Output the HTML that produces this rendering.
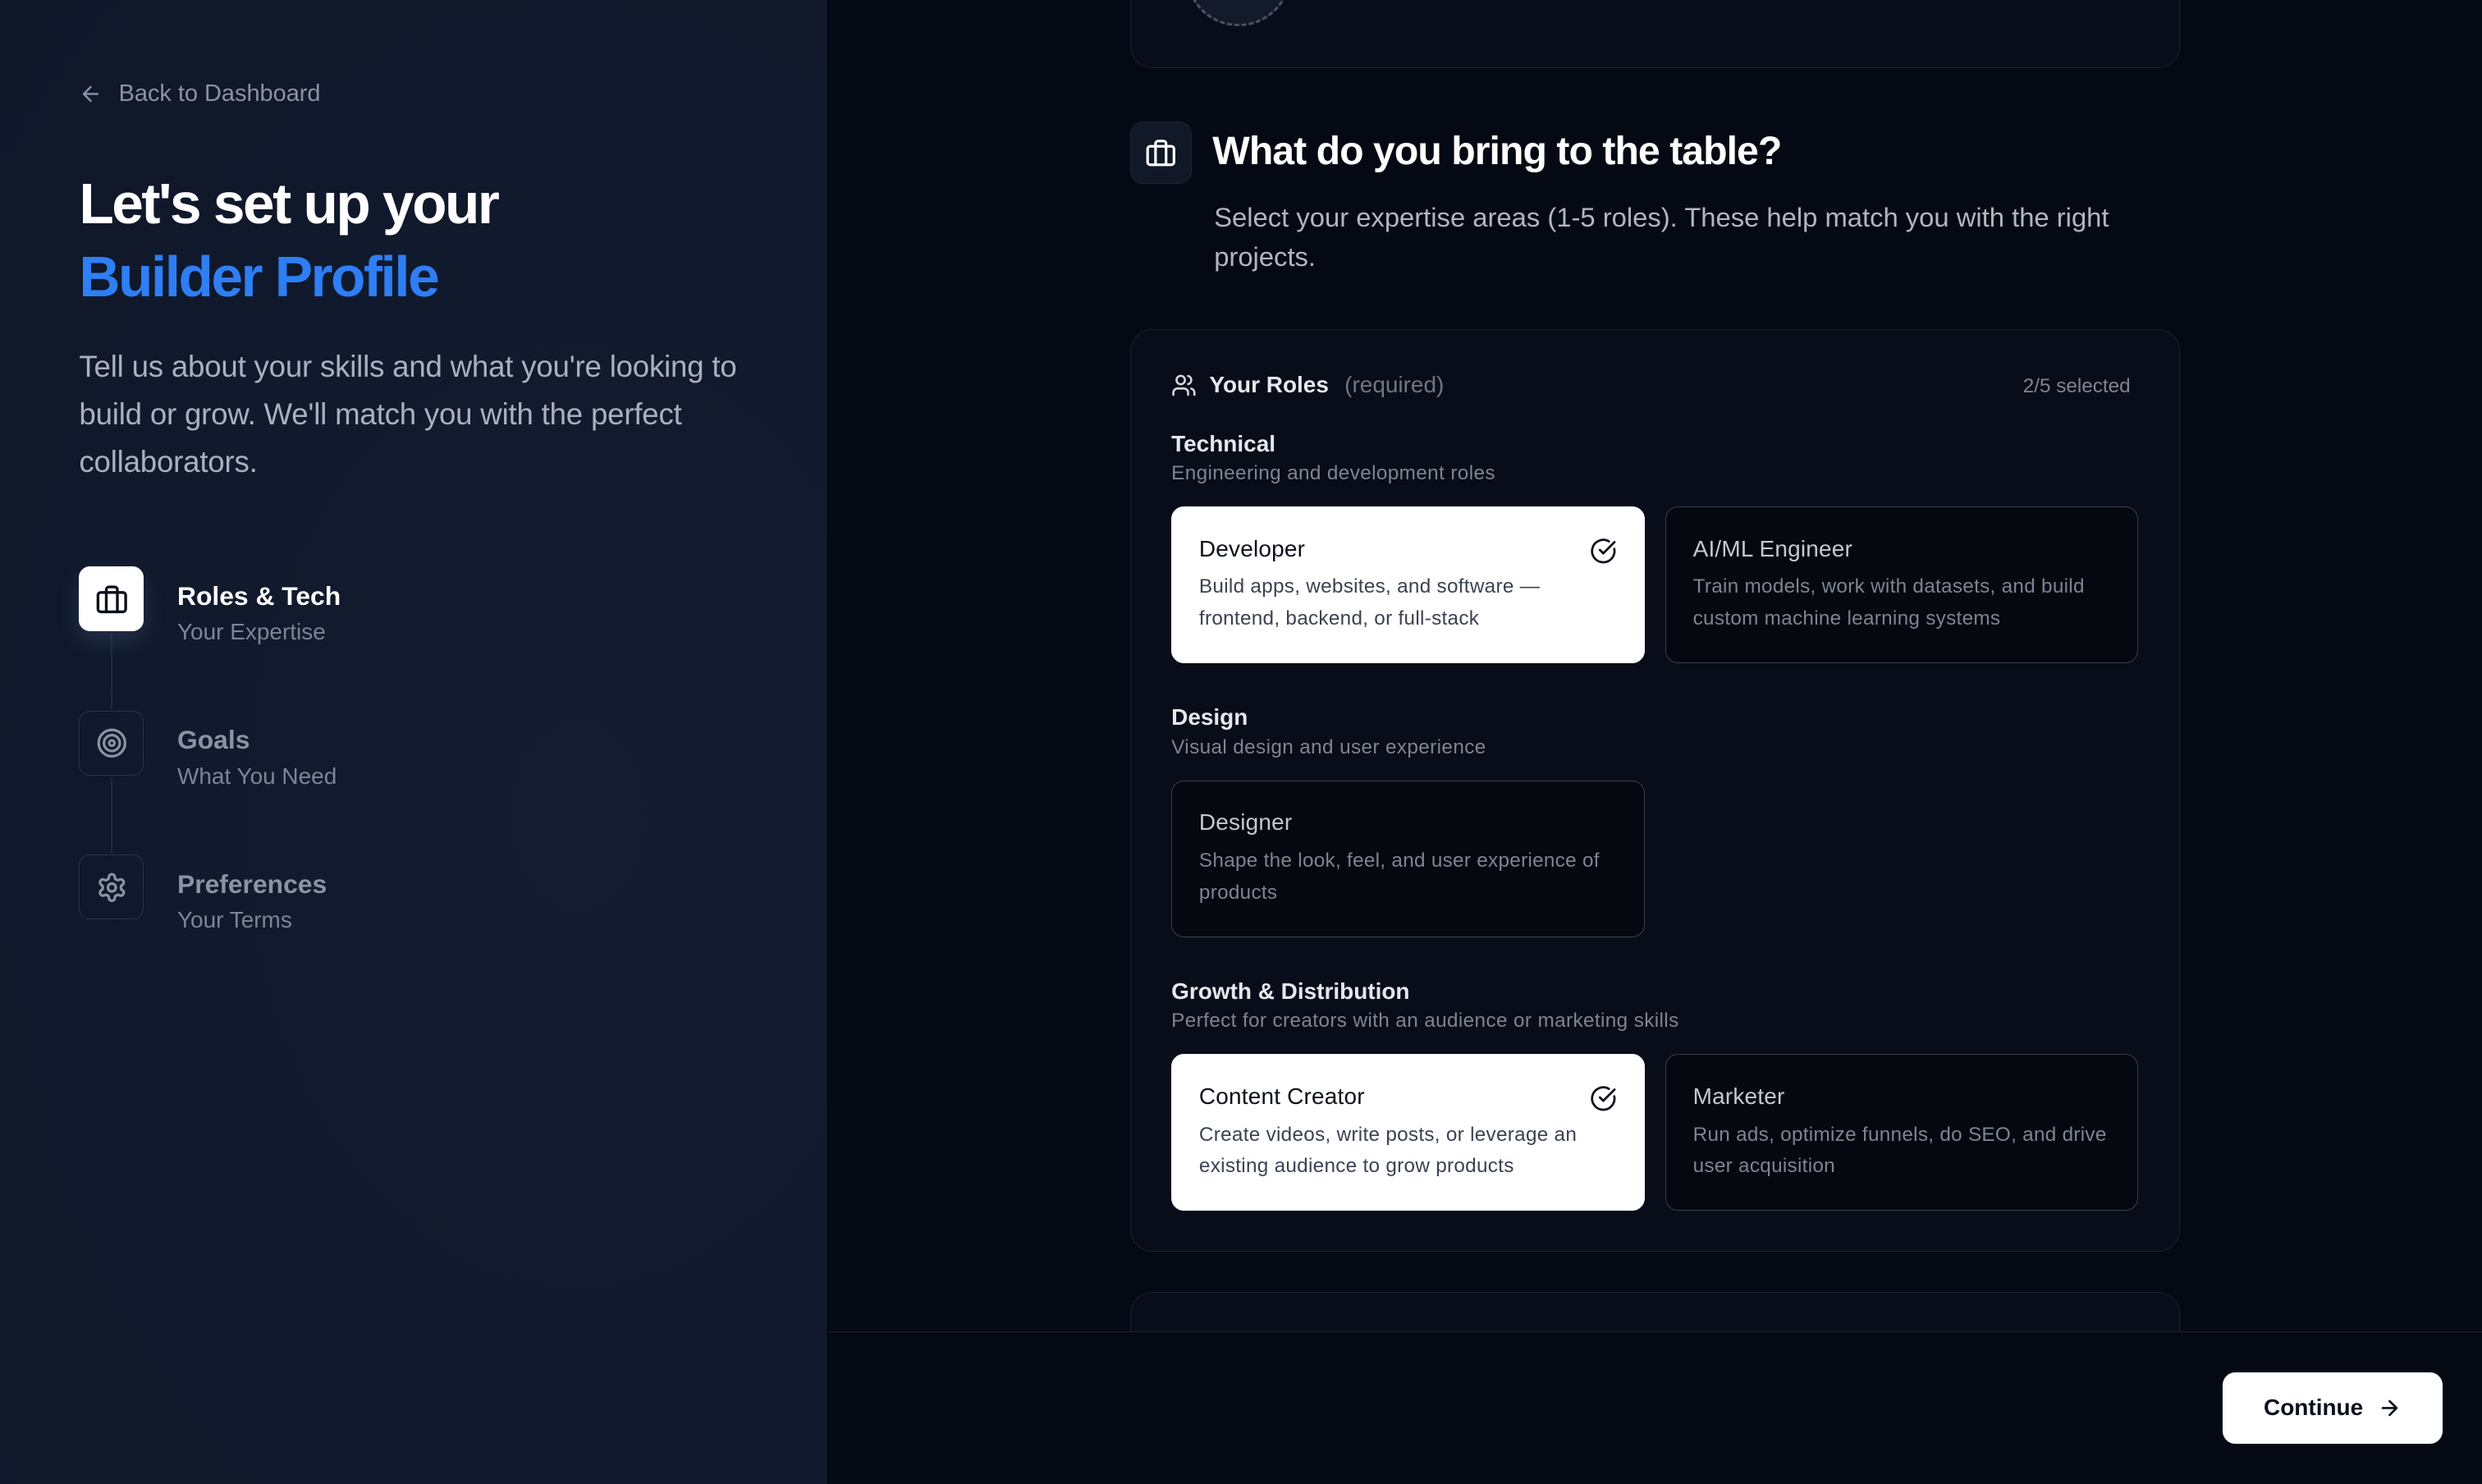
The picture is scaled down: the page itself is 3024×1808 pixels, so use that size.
<!DOCTYPE html>
<html><head><meta charset="utf-8">
<style>
*{box-sizing:border-box;margin:0;padding:0}
html,body{width:3024px;height:1808px;overflow:hidden;background:#050913}
#w{zoom:1.92857;width:1568px;height:937.5px;position:relative;font-family:"Liberation Sans",sans-serif;overflow:hidden;background:#050913}
.left{position:absolute;left:0;top:0;width:522px;height:100%;background:radial-gradient(ellipse at 70% 55%,#141d30 0%,#111a2c 45%,#0f1729 100%);border-right:1px solid #1a2233}
.ab{position:absolute;white-space:nowrap}
.back{left:50px;top:51px;font-size:15px;color:#8a93a6;display:flex;align-items:center;gap:10px}
.h1{left:50px;top:106px;font-size:36px;font-weight:700;letter-spacing:-1.3px;line-height:46px;color:#fff}
.h1 span{color:#2e7ef4}
.p{left:50px;top:217px;font-size:19px;line-height:30px;color:#a9b0be;white-space:normal;width:440px;letter-spacing:-0.1px}
.step{position:absolute;left:50px;width:41px;height:41px;border-radius:7px;border:1px solid #2a3244;display:flex;align-items:center;justify-content:center}
.st{position:absolute;left:112px;font-size:16.5px;font-weight:700;color:#8a93a3}
.ss{position:absolute;left:112px;font-size:14.5px;color:#7c8596}
.vl{position:absolute;left:70px;width:1px;background:#1f283a}
.right{position:absolute;left:523px;top:0;right:0;bottom:0;background:#050913}
.card{position:absolute;background:#080d19;border:1px solid #1a2233;border-radius:14px}
.rc{position:absolute;width:299px;height:99px;border-radius:8px;border:1px solid #3a404c;background:#05080f;padding:18px 17px}
.rc.sel{background:#fff;border-color:#fff}
.rc b{display:block;font-size:14.5px;font-weight:400;color:#c4c8d0;margin-bottom:6px;margin-top:0;letter-spacing:0.1px}
.rc p{font-size:12.6px;line-height:20px;color:#7d8494;letter-spacing:0.15px;white-space:nowrap}
.rc.sel b{color:#0a0f1a}
.rc.sel p{color:#3b4250}
.chk{position:absolute;right:17px;top:19px}
.gt{position:absolute;left:740px;font-size:14.5px;font-weight:700;color:#e6e8ec}
.gs{position:absolute;left:740px;font-size:12.6px;color:#7d8494;letter-spacing:0.2px}
.foot{position:absolute;left:523px;top:841px;right:0;bottom:0;background:#050913;border-top:1px solid #1c2436}
.btn{position:absolute;left:1404px;top:867px;width:139px;height:45px;background:#fff;border-radius:8px;display:flex;align-items:center;justify-content:center;gap:9px;font-size:14.5px;font-weight:700;color:#0a0f1a}
</style></head><body><div id="w">
<div class="left">
 <div class="ab back"><svg width="15" height="15" viewBox="0 0 24 24" fill="none" stroke="#8a93a6" stroke-width="2" stroke-linecap="round" stroke-linejoin="round"><path d="M19 12H5M12 19l-7-7 7-7"/></svg>Back to Dashboard</div>
 <div class="ab h1">Let's set up your<br><span>Builder Profile</span></div>
 <div class="ab p">Tell us about your skills and what you're looking to build or grow. We'll match you with the perfect collaborators.</div>
 <div class="vl" style="top:400px;height:48px"></div>
 <div class="vl" style="top:491px;height:48px"></div>
 <div class="step" style="top:358px;background:#fff;border-color:#fff;box-shadow:0 6px 14px rgba(120,150,220,.18)"><svg width="21" height="21" viewBox="0 0 24 24" fill="none" stroke="#0a0f1a" stroke-width="2" stroke-linecap="round" stroke-linejoin="round"><rect x="2" y="7" width="20" height="14" rx="2"/><path d="M16 21V5a2 2 0 0 0-2-2h-4a2 2 0 0 0-2 2v16"/></svg></div>
 <div class="st" style="top:367px;color:#fff">Roles &amp; Tech</div>
 <div class="ss" style="top:391px">Your Expertise</div>
 <div class="step" style="top:449px"><svg width="20" height="20" viewBox="0 0 24 24" fill="none" stroke="#8a93a3" stroke-width="2"><circle cx="12" cy="12" r="10"/><circle cx="12" cy="12" r="6"/><circle cx="12" cy="12" r="2"/></svg></div>
 <div class="st" style="top:458px">Goals</div>
 <div class="ss" style="top:482px">What You Need</div>
 <div class="step" style="top:540px"><svg width="20" height="20" viewBox="0 0 24 24" fill="none" stroke="#8a93a3" stroke-width="2" stroke-linecap="round" stroke-linejoin="round"><path d="M12.22 2h-.44a2 2 0 0 0-2 2v.18a2 2 0 0 1-1 1.73l-.43.25a2 2 0 0 1-2 0l-.15-.08a2 2 0 0 0-2.73.73l-.22.38a2 2 0 0 0 .73 2.73l.15.1a2 2 0 0 1 1 1.72v.51a2 2 0 0 1-1 1.74l-.15.09a2 2 0 0 0-.73 2.73l.22.38a2 2 0 0 0 2.73.73l.15-.08a2 2 0 0 1 2 0l.43.25a2 2 0 0 1 1 1.73V20a2 2 0 0 0 2 2h.44a2 2 0 0 0 2-2v-.18a2 2 0 0 1 1-1.73l.43-.25a2 2 0 0 1 2 0l.15.08a2 2 0 0 0 2.73-.73l.22-.39a2 2 0 0 0-.73-2.73l-.15-.08a2 2 0 0 1-1-1.74v-.5a2 2 0 0 1 1-1.74l.15-.09a2 2 0 0 0 .73-2.73l-.22-.38a2 2 0 0 0-2.73-.73l-.15.08a2 2 0 0 1-2 0l-.43-.25a2 2 0 0 1-1-1.73V4a2 2 0 0 0-2-2z"/><circle cx="12" cy="12" r="3"/></svg></div>
 <div class="st" style="top:549px">Preferences</div>
 <div class="ss" style="top:573px">Your Terms</div>
</div>
<div class="right"></div>
<div class="card" style="left:714px;top:-30px;width:663px;height:73px;overflow:hidden">
 <div style="position:absolute;left:35px;top:-20px;width:66px;height:66px;border-radius:50%;background:#131a29;border:2px dashed #4a5264"></div>
</div>
<div style="position:absolute;left:714px;top:77px;width:39px;height:39px;border-radius:8px;background:#111827;border:1px solid #1c2434;display:flex;align-items:center;justify-content:center"><svg width="20" height="20" viewBox="0 0 24 24" fill="none" stroke="#fff" stroke-width="2" stroke-linecap="round" stroke-linejoin="round"><rect x="2" y="7" width="20" height="14" rx="2"/><path d="M16 21V5a2 2 0 0 0-2-2h-4a2 2 0 0 0-2 2v16"/></svg></div>
<div class="ab" style="left:766px;top:81px;font-size:25px;font-weight:700;color:#fff;letter-spacing:-0.5px">What do you bring to the table?</div>
<div class="ab" style="left:767px;top:125px;font-size:17px;line-height:25px;color:#b0b6c2;white-space:normal;width:600px">Select your expertise areas (1-5 roles). These help match you with the right projects.</div>
<div class="card" style="left:714px;top:208px;width:663px;height:583px"></div>
<div class="ab" style="left:740px;top:235px;display:flex;align-items:center;gap:8px">
 <svg width="16" height="16" viewBox="0 0 24 24" fill="none" stroke="#d5d8de" stroke-width="2" stroke-linecap="round" stroke-linejoin="round"><path d="M16 21v-2a4 4 0 0 0-4-4H6a4 4 0 0 0-4 4v2"/><circle cx="9" cy="7" r="4"/><path d="M22 21v-2a4 4 0 0 0-3-3.87M16 3.13a4 4 0 0 1 0 7.75"/></svg>
 <span style="font-size:14.5px;font-weight:700;color:#e6e8ec">Your Roles</span><span style="font-size:14.5px;color:#6f7686;margin-left:2px">(required)</span></div>
<div class="ab" style="left:1278px;top:237px;font-size:12.6px;color:#7d8494">2/5 selected</div>
<div class="gt" style="top:272px">Technical</div>
<div class="gs" style="top:292px">Engineering and development roles</div>
<div class="rc sel" style="left:740px;top:320px"><b>Developer</b><p>Build apps, websites, and software —<br>frontend, backend, or full-stack</p>
 <svg class="chk" width="17" height="17" viewBox="0 0 24 24" fill="none" stroke="#0a0f1a" stroke-width="2" stroke-linecap="round" stroke-linejoin="round"><path d="M21.8 10A10 10 0 1 1 17 3.34"/><path d="m9 11 3 3L22 4"/></svg></div>
<div class="rc" style="left:1052px;top:320px"><b>AI/ML Engineer</b><p>Train models, work with datasets, and build<br>custom machine learning systems</p></div>
<div class="gt" style="top:445px">Design</div>
<div class="gs" style="top:465px">Visual design and user experience</div>
<div class="rc" style="left:740px;top:493px"><b>Designer</b><p>Shape the look, feel, and user experience of<br>products</p></div>
<div class="gt" style="top:618px">Growth &amp; Distribution</div>
<div class="gs" style="top:638px">Perfect for creators with an audience or marketing skills</div>
<div class="rc sel" style="left:740px;top:666px"><b>Content Creator</b><p>Create videos, write posts, or leverage an<br>existing audience to grow products</p>
 <svg class="chk" width="17" height="17" viewBox="0 0 24 24" fill="none" stroke="#0a0f1a" stroke-width="2" stroke-linecap="round" stroke-linejoin="round"><path d="M21.8 10A10 10 0 1 1 17 3.34"/><path d="m9 11 3 3L22 4"/></svg></div>
<div class="rc" style="left:1052px;top:666px"><b>Marketer</b><p>Run ads, optimize funnels, do SEO, and drive<br>user acquisition</p></div>
<div class="card" style="left:714px;top:816px;width:663px;height:100px"></div>
<div class="foot"></div>
<div class="btn">Continue <svg width="15" height="15" viewBox="0 0 24 24" fill="none" stroke="#0a0f1a" stroke-width="2.2" stroke-linecap="round" stroke-linejoin="round"><path d="M5 12h14M12 5l7 7-7 7"/></svg></div>
</div></body></html>
